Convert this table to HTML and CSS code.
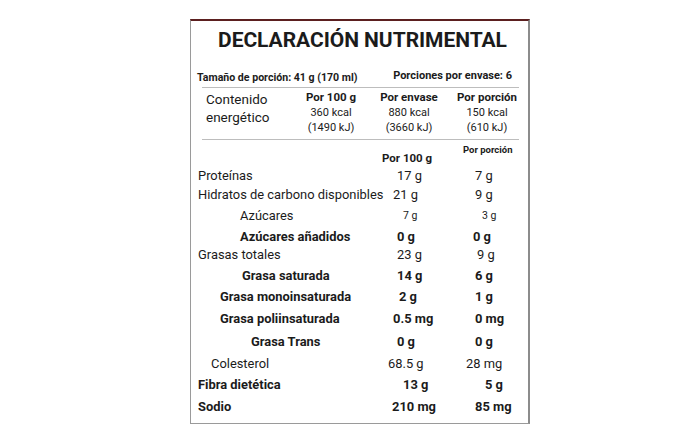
FILE: index.html
```html
<!DOCTYPE html>
<html lang="es">
<head>
<meta charset="utf-8">
<title>Declaración nutrimental</title>
<link rel="stylesheet" href="styles.css">
</head>
<body>
<div class="label">
  <h1 class="title">DECLARACIÓN NUTRIMENTAL</h1>
  <div class="serving">
    <span>Tamaño de porción: 41 g (170 ml)</span>
    <span class="servings">Porciones por envase: 6</span>
  </div>
  <div class="rule"></div>
  <div class="energy">
    <div class="energy-name">Contenido<br>energético</div>
    <div class="energy-col"><b>Por 100 g</b><span>360 kcal</span><span>(1490 kJ)</span></div>
    <div class="energy-col"><b>Por envase</b><span>880 kcal</span><span>(3660 kJ)</span></div>
    <div class="energy-col"><b>Por porción</b><span>150 kcal</span><span>(610 kJ)</span></div>
  </div>
  <div class="rule"></div>
  <div class="subhead">
    <b class="sub-100">Por 100 g</b>
    <b class="sub-por">Por porción</b>
  </div>
  <div class="nutrients">
    <div class="n">Proteínas</div><div class="va">17 g</div><div class="vb">7 g</div>
    <div class="n">Hidratos de carbono disponibles</div><div class="va s-4">21 g</div><div class="vb">9 g</div>
    <div class="n in-2">Azúcares</div><div class="va s6 sm">7 g</div><div class="vb s7 sm">3 g</div>
    <div class="n in-2 bold">Azúcares añadidos</div><div class="va bold">0 g</div><div class="vb s-2 bold">0 g</div>
    <div class="n up">Grasas totales</div><div class="va up">23 g</div><div class="vb s2 up">9 g</div>
    <div class="n in-2b bold">Grasa saturada</div><div class="va bold">14 g</div><div class="vb bold">6 g</div>
    <div class="n in-1 bold">Grasa monoinsaturada</div><div class="va s2 bold">2 g</div><div class="vb bold">1 g</div>
    <div class="n in-1 bold">Grasa poliinsaturada</div><div class="va s-4 bold">0.5 mg</div><div class="vb bold">0 mg</div>
    <div class="n in-3 bold">Grasa Trans</div><div class="va bold">0 g</div><div class="vb bold">0 g</div>
    <div class="n in-c">Colesterol</div><div class="va s-9">68.5 g</div><div class="vb s-9">28 mg</div>
    <div class="n bold">Fibra dietética</div><div class="va s6 bold">13 g</div><div class="vb s10 bold">5 g</div>
    <div class="n bold">Sodio</div><div class="va s-5 bold">210 mg</div><div class="vb bold">85 mg</div>
  </div>
</div>
</body>
</html>
```

FILE: styles.css
```css
* { box-sizing: border-box; }

html, body {
  margin: 0;
  padding: 0;
  background: #ffffff;
}

body {
  font-family: Roboto, "Liberation Sans", sans-serif;
  color: #1b1b1b;
  padding-top: 19px;
}

.label {
  margin-left: 190px;
  width: 340px;
  height: 405px;
  border-top: 2px solid #5b1f1f;
  border-left: 1px solid #9a9a9a;
  border-bottom: 1px solid #9a9a9a;
  border-right: 2px solid #8c8c8c;
  display: flex;
  flex-direction: column;
}

.title {
  margin: 0;
  padding: 5px 0 0 6px;
  height: 46px;
  font-size: 21px;
  line-height: 28px;
  font-weight: 700;
  text-align: center;
  letter-spacing: -0.05px;
}

.serving {
  display: flex;
  justify-content: space-between;
  align-items: center;
  padding: 0 16px 0 6px;
  height: 20px;
  font-size: 10.6px;
  font-weight: 700;
}

.servings {
  font-size: 11px;
  padding-bottom: 3px;
}

.rule {
  height: 1px;
  margin: 0 9px 0 11px;
  background: #bdbdbd;
  flex: none;
}

.energy {
  display: grid;
  grid-template-columns: 86px 78px 78px 78px;
  padding: 2px 0 4px 15px;
}

.energy-name {
  font-size: 13.5px;
  line-height: 18px;
}

.energy-col {
  display: flex;
  flex-direction: column;
  align-items: center;
  font-size: 11px;
  line-height: 15px;
}

.energy-col b {
  font-weight: 700;
  font-size: 11.5px;
}

.subhead {
  position: relative;
  height: 26px;
  flex: none;
}

.sub-100 {
  position: absolute;
  left: 191px;
  bottom: 0;
  font-size: 11.5px;
  line-height: 15px;
}

.sub-por {
  position: absolute;
  left: 272px;
  top: 3px;
  font-size: 9.5px;
  line-height: 13px;
}

.nutrients {
  display: grid;
  grid-template-columns: 190px 78px 1fr;
  grid-template-rows: 18px 20px 22px 21px 19px 19px 22px 23px 23px 21px 21px 22px;
  padding-left: 7px;
  font-size: 12.9px;
}

.nutrients > div {
  display: flex;
  align-items: center;
  white-space: nowrap;
}

.va { padding-left: 9px; }
.vb { padding-left: 9px; }

.bold { font-weight: 700; }
.sm { font-size: 10.5px; }
.up { align-items: flex-start !important; padding-top: 0; }

.in-1 { padding-left: 22px; }
.in-2 { padding-left: 42px; }
.in-2b { padding-left: 44px; }
.in-3 { padding-left: 53px; }
.in-c { padding-left: 13px; }

.s-9 { padding-left: 0; }
.s-5 { padding-left: 4px; }
.s-4 { padding-left: 5px; }
.s-2 { padding-left: 7px; }
.s2 { padding-left: 11px; }
.s6 { padding-left: 15px; }
.s7 { padding-left: 16px; }
.s10 { padding-left: 19px; }
```
